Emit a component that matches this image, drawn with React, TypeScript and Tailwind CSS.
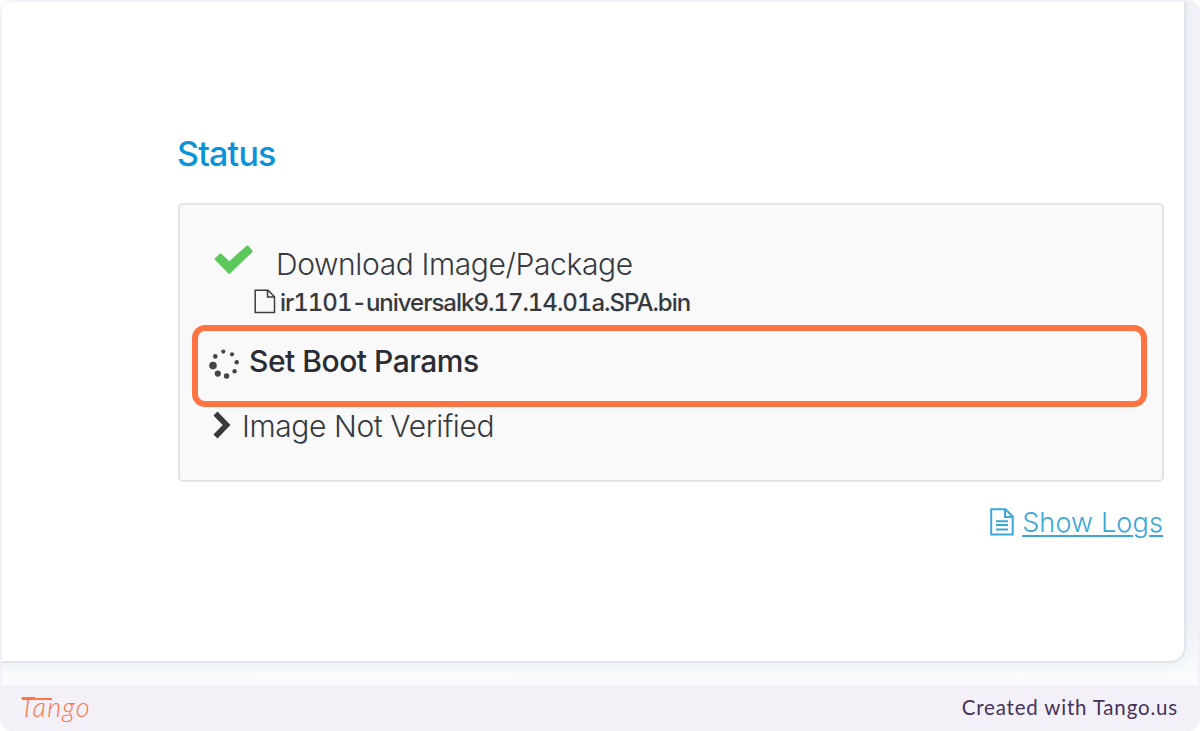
const SPINNER_DOTS = [
  { cx: 15.3, cy: 3.6, r: 2.1 },
  { cx: 24, cy: 6.3, r: 2.1 },
  { cx: 28.7, cy: 14.2, r: 2.2 },
  { cx: 26.6, cy: 23.2, r: 2.2 },
  { cx: 18.6, cy: 28, r: 2.7 },
  { cx: 9.8, cy: 25.6, r: 3.1 },
  { cx: 5, cy: 17.6, r: 3.8 },
  { cx: 7.3, cy: 8.4, r: 2.3 },
];

function CheckIcon() {
  return (
    <svg className="block h-8 w-10 shrink-0" viewBox="0 0 40 32" fill="#5cc75c" stroke="#5cc75c" strokeWidth="3" strokeLinejoin="round">
      <path d="M3.2 16 7.6 12 16.2 20.3 34.3 4 38 8.3 16.2 29.2Z" />
    </svg>
  );
}

function FileIcon() {
  return (
    <svg className="block h-[25px] w-[22px] shrink-0" viewBox="0 0 22 25" fill="none" stroke="#3a3d42" strokeWidth="1.5">
      <path d="M1.2 1.2H14L20.5 7.7V23.5H1.2ZM13.5 1.5V8H20.3" />
    </svg>
  );
}

function Spinner() {
  return (
    <svg className="block h-8 w-8 shrink-0" viewBox="0 0 32 32" fill="#444">
      {SPINNER_DOTS.map((d) => (
        <circle key={`${d.cx}-${d.cy}`} cx={d.cx} cy={d.cy} r={d.r} />
      ))}
    </svg>
  );
}

function ChevronIcon() {
  return (
    <svg className="block h-7 w-[18px] shrink-0" viewBox="0 0 18 28" fill="none">
      <path d="M2.5 2.5 13.6 14 2.5 25.5" stroke="#3a3a3d" strokeWidth="5.6" />
    </svg>
  );
}

function LogIcon() {
  return (
    <svg className="block h-7 w-6 shrink-0" viewBox="0 0 24 28" fill="none" stroke="#3ba7d6" strokeWidth="2">
      <path d="M1.2 1.2H15.5L22.7 8.5V26.4H1.2ZM15 1.5V9H22.5" />
      <path d="M6 13.2H18M6 17H18M6 21.5H18" />
    </svg>
  );
}

export default function App() {
  return (
    <div className="h-[731px] w-[1200px] bg-white font-['Inter',sans-serif]">
      <div className="flex h-full flex-col overflow-hidden rounded-xl bg-[#f3f1f7] pt-0.5">
        <main className="mx-0.5 h-[683px] overflow-hidden rounded-t-lg bg-linear-to-b from-[#f0f3f7] from-90% to-[#fafcfd]">
          <div className="h-[661px] w-[1184px] rounded-br-[16px] border-r-2 border-b-2 border-[#e0e5ed] bg-white pt-[132px] pl-[176px] shadow-[0_2px_12px_rgba(40,80,110,0.07)]">
            <h1 className="-ml-px h-[69px] text-[34px] leading-10 font-medium tracking-[-0.8px] text-[#0a93d8]">Status</h1>
            <section className="h-[279px] w-[985.5px] rounded-[5px] border-2 border-[#e4e4e5] bg-[#f9f9f9] pt-[38px] text-[#36393f]">
              <div className="flex h-[39px] pl-[33px]">
                <CheckIcon />
                <span className="ml-[23px] pt-px text-[30px] leading-10 font-light tracking-[-0.39px] whitespace-nowrap">Download Image/Package</span>
              </div>
              <div className="flex h-[43px] pl-[74px]">
                <div className="pt-[7px]"><FileIcon /></div>
                <span className="ml-1 pt-[2px] text-[24px] leading-[38px] font-medium tracking-[-1.02px] whitespace-nowrap tabular-nums">ir1101-universalk9.17.14.01a.SPA.bin</span>
              </div>
              <div className="ml-3 flex h-[82px] w-[955px] rounded-[13px] border-[6px] border-[#ff7442] pt-[10px] pl-[10px]">
                <div className="pt-[7px]"><Spinner /></div>
                <span className="ml-[9px] text-[30px] leading-10 font-medium tracking-[-0.48px] whitespace-nowrap text-[#292c32]">Set Boot Params</span>
              </div>
              <div className="flex pl-[33px]">
                <div className="pt-[4px]"><ChevronIcon /></div>
                <span className="ml-[11px] pt-px text-[30px] leading-9 font-light tracking-[-0.4px] whitespace-nowrap">Image Not Verified</span>
              </div>
            </section>
            <div className="flex w-[985px] justify-end pt-[20px] text-[#3ba7d6]">
              <div className="pt-[6px]"><LogIcon /></div>
              <a className="ml-2 pt-px text-[27px] leading-10 font-light tracking-[0.15px] whitespace-nowrap underline decoration-2 underline-offset-[3px]">Show Logs</a>
            </div>
          </div>
        </main>
        <footer className="flex h-[46px] items-center justify-between pr-[22px] pb-[3px] pl-5">
          <div className="relative font-['Lato',sans-serif] text-[27px] leading-8 font-light tracking-[1.2px] text-[#ff7442] italic">
            Tango
            <span className="absolute top-[7px] left-[2px] h-[2px] w-[30px] bg-[#ff7442]" />
          </div>
          <p className="font-['Lato',sans-serif] text-[20.5px] leading-6 tracking-[0.82px] text-[#46325b]">Created with Tango.us</p>
        </footer>
      </div>
    </div>
  );
}
